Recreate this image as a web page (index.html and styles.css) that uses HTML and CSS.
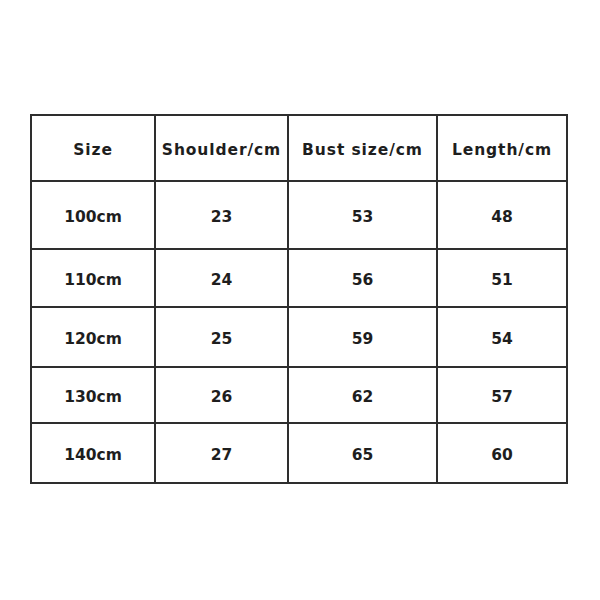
FILE: index.html
```html
<!DOCTYPE html>
<html>
<head>
<meta charset="utf-8">
<link rel="stylesheet" href="styles.css">
</head>
<body>
<div class="page">
  <div class="chart">
    <div class="cell head">Size</div><div class="cell head">Shoulder/cm</div><div class="cell head">Bust size/cm</div><div class="cell head">Length/cm</div>
    <div class="cell">100cm</div><div class="cell">23</div><div class="cell">53</div><div class="cell">48</div>
    <div class="cell">110cm</div><div class="cell">24</div><div class="cell">56</div><div class="cell">51</div>
    <div class="cell">120cm</div><div class="cell">25</div><div class="cell">59</div><div class="cell">54</div>
    <div class="cell">130cm</div><div class="cell">26</div><div class="cell">62</div><div class="cell">57</div>
    <div class="cell">140cm</div><div class="cell">27</div><div class="cell">65</div><div class="cell">60</div>
  </div>
</div>
</body>
</html>
```
FILE: styles.css
```css
html, body {
  margin: 0;
  padding: 0;
  background: #ffffff;
}
.page {
  width: 600px;
  height: 600px;
  padding: 114px 0 0 30px;
  box-sizing: border-box;
}
.chart {
  display: grid;
  grid-template-columns: 122px 131px 147px 128px;
  grid-template-rows: 64px 66px 56px 58px 54px 58px;
  gap: 2px;
  padding: 2px;
  width: max-content;
  background: #2e2e2e;
}
.cell {
  background: #ffffff;
  display: flex;
  align-items: center;
  justify-content: center;
  padding-top: 4px;
  box-sizing: border-box;
  font-family: "DejaVu Sans", sans-serif;
  font-weight: bold;
  font-size: 15.5px;
  color: #1e1e1e;
}
.head {
  letter-spacing: 0.9px;
}
```
